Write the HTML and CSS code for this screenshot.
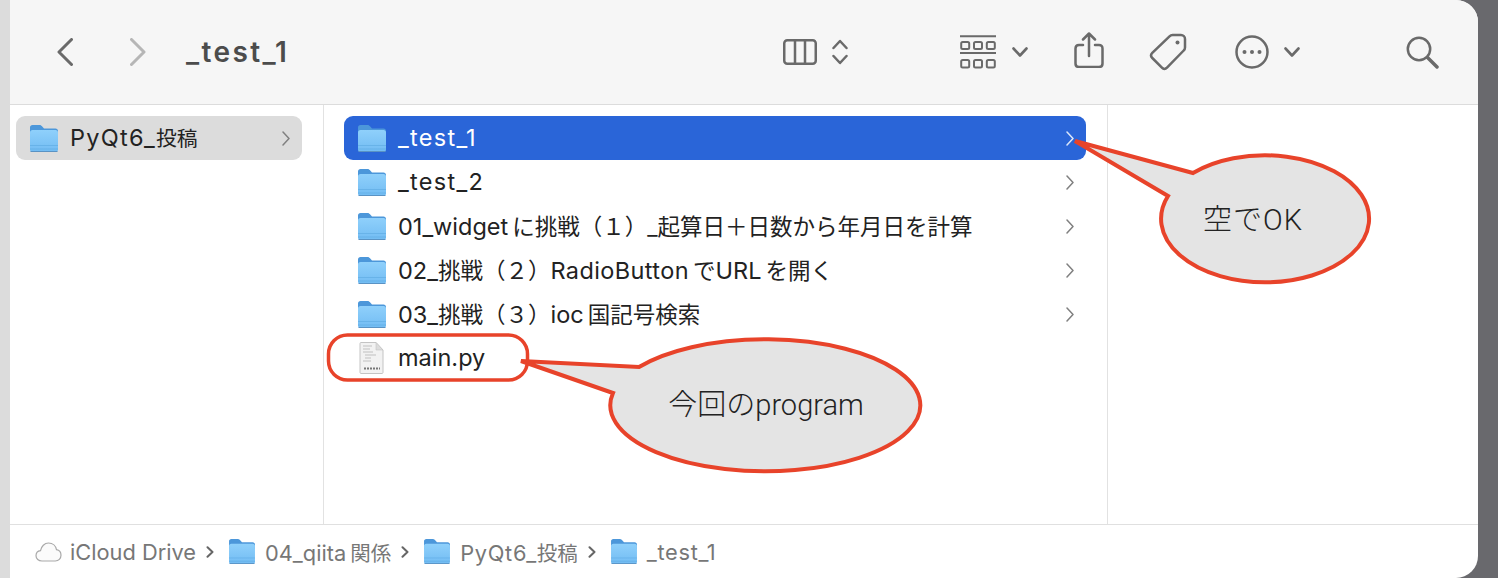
FILE: index.html
```html
<!DOCTYPE html>
<html lang="ja">
<head>
<meta charset="utf-8">
<title>_test_1</title>
<link rel="stylesheet" href="styles.css">
</head>
<body>
<svg class="defs" width="0" height="0" aria-hidden="true">
  <defs>
    <linearGradient id="fb" x1="0" y1="0" x2="0" y2="1">
      <stop offset="0" stop-color="#8fd0fb"/>
      <stop offset="1" stop-color="#72bcf3"/>
    </linearGradient>
    <symbol id="folder" viewBox="0 0 28 27">
      <path d="M0 2.500C0 1 1 0 2.500 0h7c1 0 1.600.4 2.300 1.100L14 3.500h11.500C27 3.500 28 4.500 28 6v5H0z" fill="#4c97da"/>
      <path d="M0 7.500C0 6 1 5 2.500 5h23C27 5 28 6 28 7.500v17c0 1.500-1 2.500-2.500 2.500h-23C1 27 0 26 0 24.500z" fill="url(#fb)"/>
      <path d="M0 20.500h28M0 24h28" stroke="#63aee6" stroke-width=".8" fill="none"/>
      <path d="M.5 26.500h27" stroke="#5a93c4" stroke-width="1" fill="none"/>
    </symbol>
    <symbol id="chev" viewBox="0 0 8 15">
      <path d="M1 1l6 6.500L1 14" fill="none" stroke="currentColor" stroke-width="1.500" stroke-linecap="round" stroke-linejoin="round"/>
    </symbol>
    <symbol id="chevdown" viewBox="0 0 16 10">
      <path d="M1.500 1.500L8 8.500l6.500-7" fill="none" stroke="currentColor" stroke-width="2.600" stroke-linecap="round" stroke-linejoin="round"/>
    </symbol>
    <symbol id="crumbsep" viewBox="0 0 8 12">
      <path d="M1.500 1.200L6.500 6l-5 4.800" fill="none" stroke="currentColor" stroke-width="2" stroke-linecap="round" stroke-linejoin="round"/>
    </symbol>
  </defs>
</svg>

<div class="desk">
  <div class="window">
    <header class="toolbar">
      <svg class="ic back" viewBox="0 0 16 28"><path d="M14.500 1.500L2 14l12.500 12.500"/></svg>
      <svg class="ic forward" viewBox="0 0 16 28"><path d="M1.500 1.500L14 14 1.500 26.500"/></svg>
      <h1 class="title">_test_1</h1>

      <svg class="ic columns" viewBox="0 0 34 26"><rect x="1.250" y="1.250" width="31.500" height="23.500" rx="3"/><path d="M12 1.500v23M22 1.500v23"/></svg>
      <svg class="ic updown" viewBox="0 0 16 26"><path d="M1.500 9L8 2l6.500 7M1.500 17L8 24l6.500-7"/></svg>

      <svg class="ic group" viewBox="0 0 36 34"><path d="M0 1.250h36M0 18h36" /><rect x="1.200" y="7" width="8" height="7" rx="1.500"/><rect x="14" y="7" width="8" height="7" rx="1.500"/><rect x="26.800" y="7" width="8" height="7" rx="1.500"/><rect x="1.200" y="25" width="8" height="7.500" rx="1.500"/><rect x="14" y="25" width="8" height="7.500" rx="1.500"/><rect x="26.800" y="25" width="8" height="7.500" rx="1.500"/></svg>
      <svg class="chevd first"><use href="#chevdown"/></svg>

      <svg class="ic share" viewBox="0 0 30 36"><path d="M9 13H5c-2.200 0-3.500 1.300-3.500 3.500v15c0 2.200 1.300 3.500 3.500 3.500h20c2.200 0 3.500-1.300 3.500-3.500v-15c0-2.200-1.300-3.500-3.500-3.500h-4"/><path d="M15 24V2M9 7.500L15 1.500l6 6"/></svg>
      <svg class="ic tag" viewBox="0 0 38 38"><path d="M23.500 2h8.500c2.200 0 4 1.800 4 4v8.500c0 1.200-.4 2.200-1.300 3L18 34.700c-1.600 1.600-3.600 1.600-5.100 0L3.300 25c-1.600-1.600-1.600-3.500 0-5.100L20.500 3.300c.9-.9 1.800-1.300 3-1.300z"/><circle class="solid" cx="28.500" cy="9.500" r="2"/></svg>
      <svg class="ic more" viewBox="0 0 34 34"><circle cx="17" cy="17" r="15.500"/><circle class="solid" cx="9.500" cy="17" r="2"/><circle class="solid" cx="17" cy="17" r="2"/><circle class="solid" cx="24.500" cy="17" r="2"/></svg>
      <svg class="chevd second"><use href="#chevdown"/></svg>
      <svg class="ic search" viewBox="0 0 33 33"><circle cx="13" cy="13" r="11.200"/><path class="thick" d="M21.500 21.500L31 31"/></svg>
    </header>

    <main class="panes">
      <nav class="pane sidebar">
        <div class="row current">
          <svg class="folder"><use href="#folder"/></svg>
          <span class="name"><span class="wide">PyQt6_</span><span class="ja">投稿</span></span>
          <svg class="chev"><use href="#chev"/></svg>
        </div>
      </nav>
      <section class="pane list">
        <div class="row selected">
          <svg class="folder"><use href="#folder"/></svg>
          <span class="name wide">_test_1</span>
          <svg class="chev"><use href="#chev"/></svg>
        </div>
        <div class="row">
          <svg class="folder"><use href="#folder"/></svg>
          <span class="name wide">_test_2</span>
          <svg class="chev"><use href="#chev"/></svg>
        </div>
        <div class="row">
          <svg class="folder"><use href="#folder"/></svg>
          <span class="name">01_widget<span class="ja gap">に挑戦（１）_起算日＋日数から年月日を計算</span></span>
          <svg class="chev"><use href="#chev"/></svg>
        </div>
        <div class="row">
          <svg class="folder"><use href="#folder"/></svg>
          <span class="name">02_<span class="ja">挑戦（２）</span><span class="latin">RadioButton</span><span class="ja gap">で</span>URL<span class="ja gap">を開く</span></span>
          <svg class="chev"><use href="#chev"/></svg>
        </div>
        <div class="row">
          <svg class="folder"><use href="#folder"/></svg>
          <span class="name">03_<span class="ja">挑戦（３）</span>ioc<span class="ja gap">国記号検索</span></span>
          <svg class="chev"><use href="#chev"/></svg>
        </div>
        <div class="row">
          <svg class="folder file" viewBox="0 0 28 32">
            <path d="M3 .5h15l7 7.500v22.500c0 .6-.4 1-1 1H3c-.6 0-1-.4-1-1V1.500c0-.6.4-1 1-1z" fill="#f2f2f2" stroke="#c4c4c4"/>
            <path d="M18 .5V8h7z" fill="#dcdcdc" stroke="#c4c4c4" stroke-width=".6"/>
            <path d="M5 4h9M5 7h7M5 10h10M7 13h11M7 16h6M5 19h8" stroke="#b4b4b4" stroke-width=".8" fill="none"/>
            <path d="M6 26.500h16" stroke="#777" stroke-width="1.800" stroke-dasharray="2 1" fill="none"/>
          </svg>
          <span class="name">main.py</span>
        </div>
      </section>
      <aside class="pane preview"></aside>
    </main>

    <footer class="pathbar">
      <svg class="cloud" viewBox="0 0 27 20"><path d="M7 19c-3.500 0-6-2.300-6-5.300 0-2.700 2-4.700 4.500-5C6.300 4.500 9.500 1 13.500 1c4.300 0 7.300 3 8 6.700 2.800.5 4.500 3 4.500 5.600 0 3.200-2.400 5.700-5.700 5.700z" fill="#fbfbfb" stroke="#a9a9a9" stroke-width="1.200"/></svg>
      <span class="crumb">iCloud Drive</span>
      <svg class="sep"><use href="#crumbsep"/></svg>
      <svg class="mini"><use href="#folder"/></svg>
      <span class="crumb">04_qiita<span class="ja gap">関係</span></span>
      <svg class="sep"><use href="#crumbsep"/></svg>
      <svg class="mini"><use href="#folder"/></svg>
      <span class="crumb"><span class="wide">PyQt6_</span><span class="ja">投稿</span></span>
      <svg class="sep"><use href="#crumbsep"/></svg>
      <svg class="mini"><use href="#folder"/></svg>
      <span class="crumb wide">_test_1</span>
    </footer>
  </div>

  <svg class="notes" viewBox="0 0 1498 578">
    <rect class="ring" x="328.500" y="335" width="199" height="45" rx="19"/>
    <path class="bubble" d="M1193 173A104 63.500 0 1 1 1168 196L1075 141Z"/>
    <text class="say roomy" x="1253" y="230">空でOK</text>
    <path class="bubble" d="M639 367A155 66 0 1 1 613 393L521 361Z"/>
    <text class="say" x="766" y="415">今回のprogram</text>
  </svg>
</div>
</body>
</html>
```

FILE: styles.css
```css
* { box-sizing: border-box; }
html, body { margin: 0; padding: 0; }
body {
  font-family: Inter, "Noto Sans CJK JP", sans-serif;
  overflow: hidden;
}
.defs { position: absolute; }
.desk {
  position: relative;
  width: 1498px;
  height: 578px;
  padding-left: 10px;
  background: linear-gradient(to right, #dcdcdc 10px, #69696d 10px);
}
.window {
  width: 1468px;
  height: 578px;
  display: flex;
  flex-direction: column;
  background: #fff;
  border-radius: 0 22px 22px 0;
  overflow: hidden;
}

/* toolbar */
.toolbar {
  height: 105px;
  flex: none;
  display: flex;
  align-items: center;
  background: #f6f6f6;
  border-bottom: 1px solid #dcdcdc;
  color: #6a6a6a;
}
.ic { flex: none; fill: none; stroke: currentColor; stroke-width: 2.500; stroke-linecap: round; stroke-linejoin: round; }
.ic .solid { fill: currentColor; stroke: none; }
.ic .thick { stroke-width: 3.500; }
.back { width: 16px; height: 28px; margin-left: 47px; stroke-width: 3; }
.forward { width: 16px; height: 28px; margin-left: 57px; stroke-width: 3; color: #b6b6b6; }
.title {
  margin: 0 0 1px 40px;
  width: 597px;
  font-size: 28px;
  font-weight: 600;
  letter-spacing: 2.400px;
  color: #4c4c4c;
}
.columns { width: 34px; height: 26px; }
.updown { width: 16px; height: 26px; margin-left: 15px; }
.group { width: 36px; height: 34px; margin-left: 112px; stroke-width: 2; }
.chevd { width: 16px; height: 10px; flex: none; color: #6a6a6a; }
.chevd.first { margin-left: 16px; }
.share { width: 30px; height: 36px; margin-left: 46px; margin-top: -4px; }
.tag { width: 38px; height: 38px; margin-left: 45px; }
.more { width: 34px; height: 34px; margin-left: 48px; }
.chevd.second { margin-left: 15px; }
.search { width: 33px; height: 33px; margin-left: 106px; }

/* panes */
.panes { flex: 1; display: flex; min-height: 0; }
.pane { padding-top: 11px; }
.sidebar { width: 314px; border-right: 1px solid #e2e2e2; padding-left: 6px; padding-right: 21px; }
.list { width: 784px; border-right: 1px solid #e2e2e2; padding-left: 20px; padding-right: 21px; }
.preview { flex: 1; }
.row {
  height: 44px;
  display: flex;
  align-items: center;
  padding-left: 14px;
  border-radius: 9px;
  font-size: 23.500px;
  color: #222;
}
.folder { width: 28px; height: 27px; flex: none; margin-right: 12px; }
.file { height: 32px; }
.name { flex: 1; white-space: nowrap; padding-bottom: 2px; }
.ja { font-size: 22.500px; }
.sidebar .ja { font-size: 20.800px; }
.gap { margin-left: 4px; }
.wide { letter-spacing: 1.300px; }
.latin { letter-spacing: .4px; }
.chev { width: 8px; height: 15px; flex: none; margin-right: 12px; color: #808080; }
.current { background: #dcdcdc; }
.selected { background: #2a65d8; color: #fff; }
.selected .chev { color: #dbe6fa; }

/* path bar */
.pathbar {
  flex: none;
  height: 54px;
  display: flex;
  align-items: center;
  padding-left: 25px;
  border-top: 1px solid #e0e0e0;
  font-size: 21.800px;
  color: #777;
}
.pathbar .ja { font-size: 20.500px; }
.pathbar .wide { letter-spacing: .7px; }
.cloud { width: 27px; height: 20px; margin-right: 8px; flex: none; }
.crumb { white-space: nowrap; }
.mini { width: 26px; height: 25px; margin-right: 10px; flex: none; }
.sep { width: 8px; height: 12px; margin: 0 15px 0 10px; flex: none; color: #666; }

/* annotations */
.notes { position: absolute; left: 0; top: 0; width: 1498px; height: 578px; pointer-events: none; }
.ring { fill: none; stroke: #e8432a; stroke-width: 3.500; }
.bubble { fill: #e4e4e4; stroke: #e8432a; stroke-width: 4; stroke-linejoin: miter; }
.say {
  font-family: Roboto, "Noto Sans CJK JP", sans-serif;
  font-size: 29px;
  font-weight: 300;
  fill: #222;
  text-anchor: middle;
}
.say.roomy { letter-spacing: 1px; }
```
